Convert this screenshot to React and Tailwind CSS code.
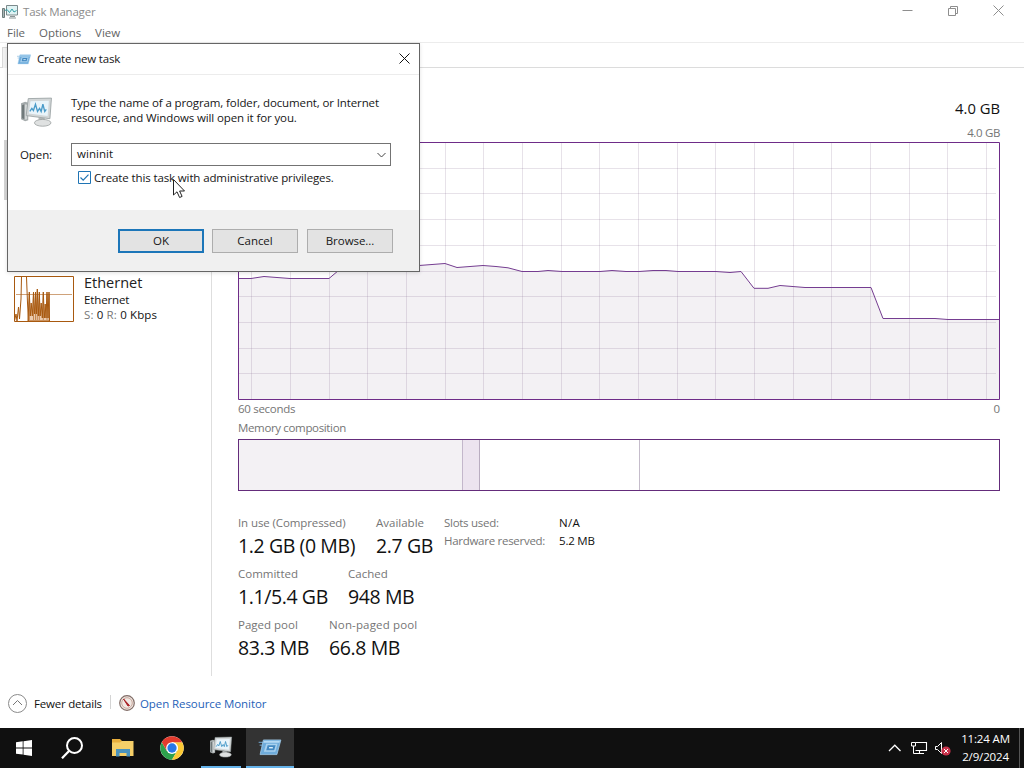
import React from "react";

const GRID_X = Array.from({ length: 20 }, (_, i) => Math.round(13.2 + i * 38.68) + 0.5);
const GRID_Y = Array.from({ length: 9 }, (_, i) => Math.round(25.7 * (i + 1)) + 0.5);
const USAGE =
  "0.5,136.5 13,136.5 26,134.5 52,136.5 91,136.5 104,125.5 130,124.5 181,123.5 207,121.5 219,125.5 245,123.5 258,124.5 270,125.8 284,129.5 300,129.5 310,128.5 324,129.5 362,129.5 374,128.5 388,129.5 401,129.5 415,128.5 428,128.5 440,129.5 478,129.5 492,130.5 503,129.5 516,146.3 530,146.3 542,143.5 567,145.5 633,145.5 645,176.5 697,176.5 710,177.5 761.5,177.5";

function TaskManagerIcon({ className }) {
  return (
    <svg className={className} viewBox="0 0 32 30">
      <path d="M1 6.500l4-1.500 3 1v17l-3 1-4-2z" fill="#a4aaab" />
      <path d="M2 8.500l2.500-1V22L2 21z" fill="#6f7879" />
      <path d="M4.500 7.500l2.500.5v14l-2.500.5z" fill="#d3d7d7" />
      <path d="M18 20l6 1 1 4h-7z" fill="#b3b7b7" />
      <ellipse cx="22" cy="25.500" rx="8" ry="3.300" fill="#dfe1e1" stroke="#9ea3a3" strokeWidth=".8" />
      <path d="M8 2l22.500-.5L29 21.500 6 18.500z" fill="#d2d6d7" stroke="#979fa0" strokeWidth=".8" />
      <path d="M10.200 4.500l17.800-.3-1.200 14.600L8.500 16.500z" fill="#e9f4fa" />
      <path d="M9.500 14.500l2-3 1.500 2 2-6 2 7 2-3 1.500 3 1.700-7 1.800 7 1.500-2" fill="none" stroke="#4a9bc9" strokeWidth="1.300" />
    </svg>
  );
}

function TitleIcon({ className }) {
  return (
    <svg className={className} viewBox="0 0 16 14">
      <path d="M0.500 3.500h2v9h-2z" fill="#aab6b6" stroke="#6d7c7c" />
      <path d="M4.500 0.500h11v9.500h-11z" fill="#dff3f4" stroke="#7c8a8c" />
      <path d="M3 5.500l2-1 2.500 3 2.500-3.500 2 3 2.500-1.500" fill="none" stroke="#35a0a6" />
      <path d="M8 11.500h5M7 13h7" stroke="#8a9596" strokeWidth="1.200" />
    </svg>
  );
}

function RunIcon({ className }) {
  return (
    <svg className={className} viewBox="0 0 24 18">
      <path d="M0 3.500h5M1 6.500h4" stroke="#76aedb" />
      <path d="M5 1h18.500l-4.200 15.500H1.500z" fill="#6facdb" stroke="#a6d1ef" strokeWidth=".8" />
      <path d="M5.500 2l17 0-.6 2H5z" fill="#b4d9f3" />
      <path d="M8 5h12l-2.400 8.500H5.500z" fill="#a9d1ee" />
      <path d="M9.500 6.500h8.500l-1.600 5.500H8z" fill="#4389c2" />
      <path d="M11 9.200h4" stroke="#d9effc" strokeWidth="1.500" />
    </svg>
  );
}

function Chrome({ className }) {
  return (
    <svg className={className} viewBox="0 0 48 48">
      <circle cx="24" cy="24" r="23.500" fill="#fff" />
      <path d="M3.650 12.250A23.500 23.500 0 0 0 24 47.500L34.180 29.880 24 24 13.820 29.880z" fill="#2da14c" />
      <path d="M44.350 12.250A23.500 23.500 0 0 1 24 47.500L34.180 29.880A11.750 11.750 0 0 0 24 12.250z" fill="#fcc934" />
      <path d="M24 24L13.820 29.880 3.650 12.250A23.500 23.500 0 0 1 44.350 12.250H24z" fill="#e33b2e" />
      <circle cx="24" cy="24" r="11.750" fill="#fff" />
      <circle cx="24" cy="24" r="9.300" fill="#2878e8" />
    </svg>
  );
}

function TitleBar() {
  return (
    <header className="flex h-[23px] items-center justify-between pl-[2px]">
      <div className="flex items-center gap-[5px]">
        <TitleIcon className="h-[14px] w-4" />
        <span className="text-[11.5px] leading-4 tracking-[-0.2px] text-[#8c8c8c]">Task Manager</span>
      </div>
      <svg className="mr-[18px] mb-[2px] h-[14px] w-[104px]" viewBox="0 0 104 14" fill="none" stroke="#8e8e8e">
        <path d="M0.500 6.500h10" />
        <path d="M46.500 4.500h7v7h-7zM48.500 4.500v-2h7v7h-2" />
        <path d="M91.500 1.500l10 10M101.500 1.500l-10 10" />
      </svg>
    </header>
  );
}

function Menu() {
  return (
    <nav className="flex h-[19px] items-center gap-[14px] pl-[7px] text-[11.5px] leading-4 tracking-[-0.05px] text-[#636363]">
      <span>File</span>
      <span>Options</span>
      <span>View</span>
    </nav>
  );
}

function Sidebar() {
  return (
    <aside className="w-[212px] border-r border-[#dedede] pl-1">
      <div className="mt-[72px] h-[60px] w-[200px] bg-[#d4d4d4]" />
      <div className="mt-[74px] flex gap-[10px] pl-[10px]">
        <svg className="mt-[2px] h-[46px] w-[60px]" viewBox="0 0 60 46" fill="none" stroke="#a8590f">
          <path d="M2 18.500h56" stroke="#cfa27a" />
          <path d="M0.500 45L2 38l1 7 1.500-14 1 12 1.500-20L7.500 1M12.500 1L13.500 27l1 18" />
          <path
            d="M14 45L15.300 16 16.300 40 17.200 27 18.300 40 19.500 16 20.500 38 21.500 16 22.400 38 23.300 13 24.300 40 25.300 16 26.200 40 27.200 27 28.300 42 29.300 16 30.300 42 31.200 28 32 42 33 16 34 42 35 16 35.500 45z"
            fill="#d79a62"
            fillOpacity=".5"
          />
          <path d="M15.300 18V44M19.500 18V44M21.500 18V44M23.300 15V44M25.300 18V44M29.300 18V44M33 18V44M35.300 18V45" strokeOpacity=".6" />
          <path d="M0.500 0.500h59v45h-59z" />
        </svg>
        <div className="flex flex-col">
          <span className="text-[14.5px] leading-[17px] text-[#222]">Ethernet</span>
          <span className="mt-[1px] text-[11.5px] leading-[15px] tracking-[-0.12px] text-[#111]">Ethernet</span>
          <span className="text-[11.5px] leading-[15px] tracking-[0.14px] text-[#111]">
            <span className="text-[#777]">S:</span> 0 <span className="text-[#777]">R:</span> 0 Kbps
          </span>
        </div>
      </div>
    </aside>
  );
}

function UsageChart() {
  return (
    <svg className="block h-[258px] w-[762px]" viewBox="0 0 762 258" fill="none">
      <polygon points={`0.5,257.5 ${USAGE} 761.5,257.5`} fill="#f3f1f4" />
      {GRID_X.map((x) => (
        <path key={x} d={`M${x} 1V257`} stroke="#85708f" strokeOpacity=".2" />
      ))}
      {GRID_Y.map((y) => (
        <path key={y} d={`M1 ${y}H758`} stroke="#85708f" strokeOpacity=".2" />
      ))}
      <polyline points={USAGE} stroke="#753d91" />
      <path d="M0.500 0.500h761v257h-761z" stroke="#6e2c88" />
    </svg>
  );
}

function Composition() {
  return (
    <div className="flex h-[52px] border border-[#642c7b]">
      <div className="w-[224px] border-r border-[#c3b7cb] bg-[#f3f1f4]" />
      <div className="w-[17px] border-r border-[#b9adc0] bg-[#ece4ef]" />
      <div className="w-[160px] border-r border-[#c5bccb]" />
    </div>
  );
}

function Stat({ label, value, className }) {
  return (
    <div className={`flex flex-col whitespace-nowrap ${className}`}>
      <span className="text-[11.5px] leading-4 text-[#757575]">{label}</span>
      <span className="text-[19.5px] leading-[30px] tracking-[-0.4px] text-[#111]">{value}</span>
    </div>
  );
}

function Stats() {
  return (
    <div className="mt-6 flex">
      <div className="flex w-[206px] flex-col gap-[5px]">
        <div className="flex">
          <Stat label="In use (Compressed)" value="1.2 GB (0 MB)" className="w-[138px] tracking-[-0.1px]" />
          <Stat label="Available" value="2.7 GB" className="" />
        </div>
        <div className="flex">
          <Stat label="Committed" value="1.1/5.4 GB" className="w-[110px]" />
          <Stat label="Cached" value="948 MB" className="" />
        </div>
        <div className="flex">
          <Stat label="Paged pool" value="83.3 MB" className="w-[91px]" />
          <Stat label="Non-paged pool" value="66.8 MB" className="tracking-[0.15px]" />
        </div>
      </div>
      <dl className="-mt-px grid h-9 grid-cols-[115px_60px] text-[11.5px] leading-[18px] tracking-[-0.28px] whitespace-nowrap">
        <dt className="text-[#757575]">Slots used:</dt>
        <dd className="tracking-[0.3px] text-[#111]">N/A</dd>
        <dt className="text-[#757575]">Hardware reserved:</dt>
        <dd className="tracking-[-0.2px] text-[#111]">5.2 MB</dd>
      </dl>
    </div>
  );
}

function Memory() {
  return (
    <main className="flex w-[788px] flex-col pt-[30px] pl-[26px] text-[11.5px] text-[#757575]">
      <span className="self-end text-[14.8px] leading-5 text-[#111]">4.0 GB</span>
      <span className="mt-[7px] mb-[1px] self-end leading-4 tracking-[-0.35px]">4.0 GB</span>
      <UsageChart />
      <div className="mt-[1px] flex justify-between leading-4">
        <span className="tracking-[-0.3px]">60 seconds</span>
        <span>0</span>
      </div>
      <span className="mt-[3px] mb-[3px] leading-4 tracking-[-0.35px]">Memory composition</span>
      <Composition />
      <Stats />
    </main>
  );
}

function Footer() {
  return (
    <footer className="flex h-[52px] items-center pl-2 text-[11.5px]">
      <svg className="mt-[3px] h-[19px] w-[19px]" viewBox="0 0 19 19" fill="none">
        <circle cx="9.500" cy="9.500" r="9" stroke="#8b8b8b" />
        <path d="M5 11l4.500-4.500L14 11" stroke="#777" />
      </svg>
      <span className="mt-[3px] ml-[7px] w-[76px] tracking-[-0.22px] text-[#111]">Fewer details</span>
      <div className="h-[14px] w-px bg-[#d4d4d4]" />
      <svg className="mt-[2px] ml-2 h-4 w-4" viewBox="0 0 16 16" fill="none">
        <circle cx="8" cy="8" r="7.300" fill="#f1e9e4" stroke="#806c66" strokeWidth="1.200" />
        <circle cx="8" cy="8" r="5.300" stroke="#c9a79c" />
        <path d="M4.500 4L10.500 10.500 9 11z" fill="#a81f24" stroke="#a81f24" />
      </svg>
      <span className="mt-[3px] ml-[5px] tracking-[-0.08px] text-[#1f62b8]">Open Resource Monitor</span>
    </footer>
  );
}

function DialogButton({ children, primary }) {
  return (
    <button
      className={`h-6 w-[86px] bg-[#e3e3e3] leading-5 tracking-[-0.05px] ${primary ? "border-2 border-[#1c76b9]" : "border border-[#adadad]"}`}
    >
      {children}
    </button>
  );
}

function Dialog() {
  return (
    <section className="absolute top-[43px] left-[7px] flex h-[229px] w-[413px] flex-col border border-[#656565] bg-white text-[11.5px] text-[#161616] shadow-[0_1px_4px_rgba(0,0,0,0.12)]">
      <div className="flex h-[31px] items-center justify-between border-b border-[#ececec] pr-[9px] pl-[9px]">
        <div className="flex items-center gap-[6px]">
          <RunIcon className="h-[11px] w-[14px]" />
          <span className="leading-4 tracking-[-0.17px]">Create new task</span>
        </div>
        <svg className="mb-[2px] h-[11px] w-[11px]" viewBox="0 0 11 11" stroke="#111">
          <path d="M0.500 0.500l10 10M10.500 0.500l-10 10" />
        </svg>
      </div>
      <div className="flex h-[135px] flex-col">
        <div className="flex gap-[18px] pt-[20px] pl-[12px]">
          <TaskManagerIcon className="mt-[1px] h-8 w-[33px]" />
          <p className="leading-[15px] tracking-[-0.12px] whitespace-nowrap">
            Type the name of a program, folder, document, or Internet
            <br />
            resource, and Windows will open it for you.
          </p>
        </div>
        <div className="mt-[15px] flex items-center pl-[12px]">
          <span className="w-[51px] tracking-[-0.1px]">Open:</span>
          <div className="flex h-[23px] w-[320px] items-center justify-between border border-[#737373] pr-1 pl-[5px]">
            <span className="pb-[1px] tracking-[0.05px]">wininit</span>
            <svg className="h-[6px] w-[9px]" viewBox="0 0 9 6" fill="none" stroke="#444">
              <path d="M0.500 1l4 4 4-4" />
            </svg>
          </div>
        </div>
        <div className="mt-[3px] flex items-center gap-[3px] pl-[70px]">
          <svg className="h-[13px] w-[13px]" viewBox="0 0 13 13" fill="none">
            <path d="M0.500 0.500h12v12h-12z" fill="#fff" stroke="#1f74b4" />
            <path d="M2.500 6.500l2.700 2.700 5.300-5.500" stroke="#1f74b4" strokeWidth="1.200" />
          </svg>
          <span className="pt-[1px] leading-4 tracking-[-0.12px]">Create this task with administrative privileges.</span>
        </div>
      </div>
      <div className="flex flex-1 bg-[#f0f0f0] pt-[19px] pl-[110px]">
        <div className="flex gap-2 pr-[9px]">
          <DialogButton primary>OK</DialogButton>
          <DialogButton>Cancel</DialogButton>
        </div>
        <DialogButton>Browse...</DialogButton>
      </div>
    </section>
  );
}

function Taskbar() {
  return (
    <footer className="flex h-10 items-stretch bg-[#101010] text-white">
      <div className="flex w-12 items-center justify-center">
        <svg className="h-4 w-4" viewBox="0 0 16 16" fill="#fff">
          <path d="M0 2.300l6.700-1v6.200H0zM7.500 1.200L16 0v7.500H7.500zM0 8.400h6.700v6.200L0 13.700zM7.500 8.400H16V16l-8.500-1.200z" />
        </svg>
      </div>
      <div className="flex w-12 items-center justify-center">
        <svg className="h-[22px] w-[22px]" viewBox="0 0 22 22" fill="none" stroke="#fff">
          <circle cx="13.500" cy="8.500" r="7.500" strokeWidth="2" />
          <path d="M8 14L1 21.300" strokeWidth="2.200" />
        </svg>
      </div>
      <div className="flex w-[53px] items-center justify-center">
        <svg className="h-[18px] w-[22px]" viewBox="0 0 22 18">
          <path d="M0 0h8l2 2h11v4H0z" fill="#e8ae3c" />
          <path d="M0 3.500h8l2-1.500h11.500v15H0z" fill="#f6cf68" />
          <path d="M4 17.500V10h14v7.500h-3.500V14h-7v3.500z" fill="#4b93bd" />
        </svg>
      </div>
      <div className="flex w-[46px] items-center justify-center">
        <Chrome className="h-6 w-6" />
      </div>
      <div className="ml-[6px] flex w-10 items-center justify-center border-b-2 border-[#65b3ea]">
        <TaskManagerIcon className="h-[22px] w-6" />
      </div>
      <div className="ml-[5px] flex w-12 items-center justify-center border-b-2 border-[#65b3ea] bg-[#333]">
        <RunIcon className="h-[17px] w-6" />
      </div>
      <div className="ml-auto flex items-center">
        <svg className="h-4 w-[63px]" viewBox="0 0 63 16" fill="none" stroke="#fff">
          <path d="M1 11l5.800-5.800L12.500 11" strokeWidth="1.300" />
          <path d="M27.500 2.500h11v8h-11M31.500 10.500v3M28 13.500h8" strokeWidth="1.100" />
          <path d="M23.500 2.500h4v3.500h-4zM25.500 6v7.500h3" />
          <path d="M47.500 6.500h2l4-4v11l-4-4h-2z" />
          <circle cx="58" cy="11" r="4.600" fill="#c8314a" stroke="none" />
          <path d="M56 9l4 4M60 9l-4 4" />
        </svg>
        <div className="ml-2 flex w-[53px] flex-col items-center text-[11.5px] leading-[18px] tracking-[-0.15px] whitespace-nowrap">
          <span>11:24 AM</span>
          <span>2/9/2024</span>
        </div>
        <div className="mr-1 ml-[7px] h-10 w-px bg-[#555]" />
      </div>
    </footer>
  );
}

function Cursor() {
  return (
    <svg className="absolute top-[179px] left-[173px] h-5 w-[13px]" viewBox="0 0 13 20">
      <path d="M0.500 0.500v15.500l3.500-3.200 2.600 5.700 2.500-1.100-2.500-5.400h4.900z" fill="#fff" stroke="#222" />
    </svg>
  );
}

export default function App() {
  return (
    <div className="relative flex h-[768px] w-[1024px] flex-col overflow-hidden bg-white font-['Open_Sans','Noto_Sans',sans-serif]">
      <TitleBar />
      <Menu />
      <div className="h-[26px] border-t border-b border-t-[#ececec] border-b-[#dcdcdc] pt-1 pl-[2px]">
        <div className="h-[21px] w-20 border border-b-0 border-[#d9d9d9] bg-[#f2f2f2]" />
      </div>
      <div className="flex h-[608px]">
        <Sidebar />
        <Memory />
      </div>
      <Footer />
      <Taskbar />
      <Dialog />
      <Cursor />
    </div>
  );
}
